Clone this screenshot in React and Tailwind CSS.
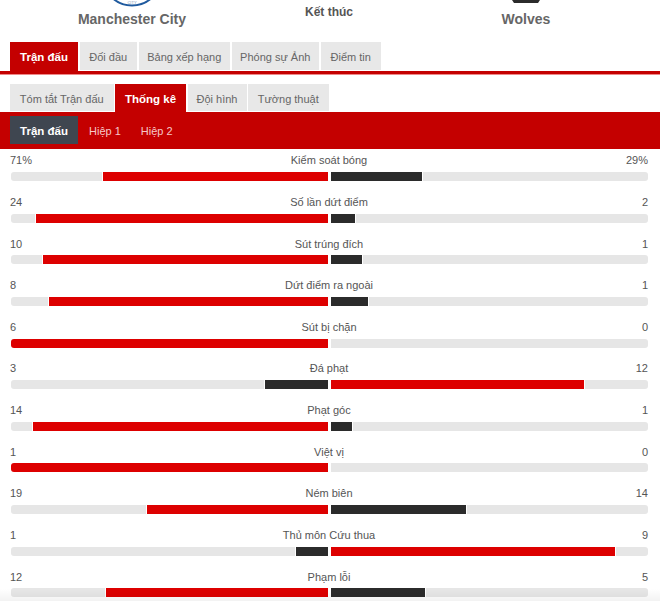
const font = { fontFamily: '"Liberation Sans", Arial, sans-serif' };

const rows = [
  ['71%', 'Kiểm soát bóng', '29%', 71, 'r'],
  ['24', 'Số lần dứt điểm', '2', 92, 'r'],
  ['10', 'Sút trúng đích', '1', 90, 'r'],
  ['8', 'Dứt điểm ra ngoài', '1', 88, 'r'],
  ['6', 'Sút bị chặn', '0', 100, 'r'],
  ['3', 'Đá phạt', '12', 20, 'l'],
  ['14', 'Phạt góc', '1', 93, 'r'],
  ['1', 'Việt vị', '0', 100, 'r'],
  ['19', 'Ném biên', '14', 57, 'r'],
  ['1', 'Thủ môn Cứu thua', '9', 10, 'l'],
  ['12', 'Phạm lỗi', '5', 70, 'r'],
];

function Tab({ children, active, className }) {
  const base = active
    ? 'h-full flex items-center justify-center bg-[#c40000] text-white font-bold text-[11.5px] whitespace-nowrap'
    : 'h-[calc(100%-1px)] flex items-center justify-center bg-[#e8e8e8] text-[#666666] text-[11px] whitespace-nowrap';
  return <div className={`${base} ${className}`}>{children}</div>;
}

function Row({ l, label, r, lw, win }) {
  const rw = 100 - lw;
  const leftColor = win === 'r' ? 'bg-[#dd0000]' : 'bg-[#2b2b2b]';
  const rightColor = win === 'r' ? 'bg-[#2b2b2b]' : 'bg-[#dd0000]';
  return (
    <div className="h-[41.65px] pt-[3px]">
      <div className="flex justify-between items-center h-[17px] pl-[10px] pr-[12px] text-[11px] text-[#555555] relative">
        <span>{l}</span>
        <span className="absolute left-0 right-[2px] text-center">{label}</span>
        <span>{r}</span>
      </div>
      <div className="flex gap-[3px] mt-[3px] ml-[11px] w-[637px] h-[9px]">
        <div className="flex-1 flex justify-end bg-[#e6e6e6] rounded-l-[3px] overflow-hidden">
          <div className={`h-full shrink-0 ${leftColor} border-l border-white box-content`} style={{ width: `${lw}%` }} />
        </div>
        <div className="flex-1 flex bg-[#e6e6e6] rounded-r-[3px] overflow-hidden">
          {rw > 0 && <div className={`h-full ${rightColor} border-r border-white box-border`} style={{ width: `${rw}%` }} />}
        </div>
      </div>
    </div>
  );
}

export default function App() {
  return (
    <div className="w-[660px] h-[601px] overflow-hidden bg-white relative" style={font}>
      <div className="h-[42px] flex">
        <div className="w-[264px] flex flex-col items-center">
          <svg width="38" height="7" viewBox="0 0 38 7" className="block">
            <circle cx="19" cy="-24" r="29.5" fill="#ffffff" stroke="#1f5a9e" strokeWidth="2" />
            <text x="19" y="3.5" textAnchor="middle" fontSize="4" fill="#7b95b8" fontFamily="Liberation Sans">CITY</text>
          </svg>
          <div className="mt-[3px] text-[14px] leading-[18px] font-bold text-[#666666]">Manchester City</div>
        </div>
        <div className="w-[130px] pt-[5px] text-center text-[12px] leading-[14px] font-bold text-[#555555]">Kết thúc</div>
        <div className="w-[264px] flex flex-col items-center">
          <svg width="28" height="7" viewBox="0 0 28 7" className="block">
            <path d="M0 0 L28 0 L26 3 L2 3 Z" fill="#2b2b2b" />
          </svg>
          <div className="mt-[3px] text-[14px] leading-[18px] font-bold text-[#666666]">Wolves</div>
        </div>
      </div>

      <div className="flex items-start gap-[1.5px] pl-[10px] h-[29px]">
        <Tab active className="w-[68px] pt-[3px]">Trận đấu</Tab>
        <Tab className="w-[57.5px] pt-[2px]">Đối đầu</Tab>
        <Tab className="w-[91.5px] pt-[2px]">Bảng xếp hạng</Tab>
        <Tab className="w-[87.5px] pt-[2px]">Phóng sự Ảnh</Tab>
        <Tab className="w-[60.5px] pt-[2px]">Điểm tin</Tab>
      </div>
      <div className="h-[4px] bg-[#c40000] border-b border-[#ee8888]" />

      <div className="flex items-start gap-[1.5px] pl-[10px] h-[28px] mt-[9px]">
        <Tab className="w-[103.5px] pt-[4px]">Tóm tắt Trận đấu</Tab>
        <Tab active className="w-[71px] pt-[3px]">Thống kê</Tab>
        <Tab className="w-[59px] pt-[4px]">Đội hình</Tab>
        <Tab className="w-[80.5px] pt-[4px]">Tường thuật</Tab>
      </div>
      <div className="h-[37px] bg-[#c40000] flex items-start pt-[4px] pl-[10px]">
        <div className="h-[28px] w-[68px] mr-[1px] pt-[3px] bg-[#3f4650] text-white font-bold text-[11.5px] flex items-center justify-center">Trận đấu</div>
        <div className="h-[28px] pt-[3px] flex items-center px-[10px] text-[11px] text-[#f6c8c8]">Hiệp 1</div>
        <div className="h-[28px] pt-[3px] flex items-center px-[10px] text-[11px] text-[#f6c8c8]">Hiệp 2</div>
      </div>

      <div>
        {rows.map((x) => (
          <Row key={x[1]} l={x[0]} label={x[1]} r={x[2]} lw={x[3]} win={x[4]} />
        ))}
      </div>
      <div className="absolute left-0 right-0 bottom-0 h-[12px] bg-gradient-to-b from-transparent to-[#0000000d]" />
    </div>
  );
}
